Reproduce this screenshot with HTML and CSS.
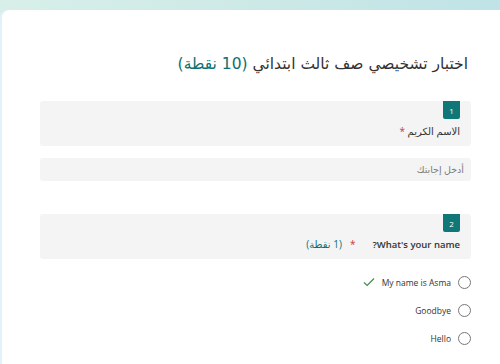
FILE: index.html
```html
<!DOCTYPE html>
<html lang="ar" dir="rtl">
<head>
    <meta charset="UTF-8">
    <meta name="viewport" content="width=device-width, initial-scale=1.0">
    <title>اختبار تشخيصي صف ثالث ابتدائي</title>
    <link rel="stylesheet" href="styles.css">
</head>
<body>
    <div class="page">
        <main class="card">
            <h1 class="title">اختبار تشخيصي صف ثالث ابتدائي <span class="points">(10 نقطة)</span></h1>

            <section class="question">
                <div class="q-head">
                    <span class="badge">1</span>
                    <div class="q-text">الاسم الكريم <span class="req">*</span></div>
                </div>
                <div class="answer-box">أدخل إجابتك</div>
            </section>

            <section class="question second">
                <div class="q-head">
                    <span class="badge">2</span>
                    <div class="q-text"><span class="en">What's your name?</span><span class="req gap">*</span><span class="q-points">(1 نقطة)</span></div>
                </div>
                <ul class="options">
                    <li class="option">
                        <span class="radio"></span>
                        <span class="opt-label">My name is Asma</span>
                        <svg class="check" width="12" height="10" viewBox="0 0 12 10"><path d="M1 5.5 L4.2 8.5 L11 1.5" fill="none" stroke="#3c8d4f" stroke-width="1.2"/></svg>
                    </li>
                    <li class="option">
                        <span class="radio"></span>
                        <span class="opt-label">Goodbye</span>
                    </li>
                    <li class="option">
                        <span class="radio"></span>
                        <span class="opt-label">Hello</span>
                    </li>
                </ul>
            </section>
        </main>
    </div>
</body>
</html>
```
FILE: styles.css
```css
body {
    margin: 0;
    padding: 0;
    font-family: "Open Sans", "DejaVu Sans", sans-serif;
    color: #333;
    background: linear-gradient(90deg, #d8efe9 0%, #cde9e6 50%, #bfe3e6 100%);
    height: 364px;
    overflow: hidden;
}
.page {
    padding: 10px 0 0 0;
}
.card {
    background: #fff;
    margin-left: 2px;
    border-top-left-radius: 8px;
    padding: 0 29px 0 38px;
    height: 360px;
    box-shadow: -2px 0 0 #e2f1fa;
}
.title {
    margin: 0;
    padding: 41px 3px 0 0;
    font-size: 15.5px;
    font-weight: normal;
    line-height: 26px;
    color: #333;
    font-family: "DejaVu Sans", sans-serif;
}
.points {
    color: #0e7070;
}
.question {
    margin-top: 24px;
}
.question.second {
    margin-top: 33px;
}
.q-head {
    display: flex;
    flex-direction: column;
    align-items: flex-start;
    background: #f4f4f4;
    border-radius: 3px;
    padding: 0 11px 7px 11px;
}
.badge {
    display: flex;
    align-items: center;
    justify-content: center;
    width: 17px;
    height: 18px;
    background: #0f7777;
    color: #fff;
    font-size: 8px;
    border-radius: 0 0 2px 2px;
}
.q-text {
    font-size: 10px;
    line-height: 15px;
    margin-top: 5px;
}
.en {
    font-weight: 600;
    font-size: 9.5px;
}
.req {
    color: #c43b3b;
}
.req.gap {
    margin-right: 17px;
}
.q-points {
    color: #0e7070;
    margin-right: 8px;
}
.answer-box {
    margin-top: 12px;
    background: #f4f4f4;
    border-radius: 3px;
    height: 23px;
    line-height: 23px;
    padding: 0 7px;
    font-size: 9.5px;
    color: #7a7a7a;
}
.options {
    list-style: none;
    margin: 9px 0 0 0;
    padding: 0;
}
.option {
    display: flex;
    align-items: center;
    height: 28px;
    font-size: 8.5px;
    color: #333;
}
.radio {
    width: 11px;
    height: 11px;
    border: 1px solid #777;
    border-radius: 50%;
    margin-left: 7px;
}
.check {
    margin-right: 7px;
}
```
